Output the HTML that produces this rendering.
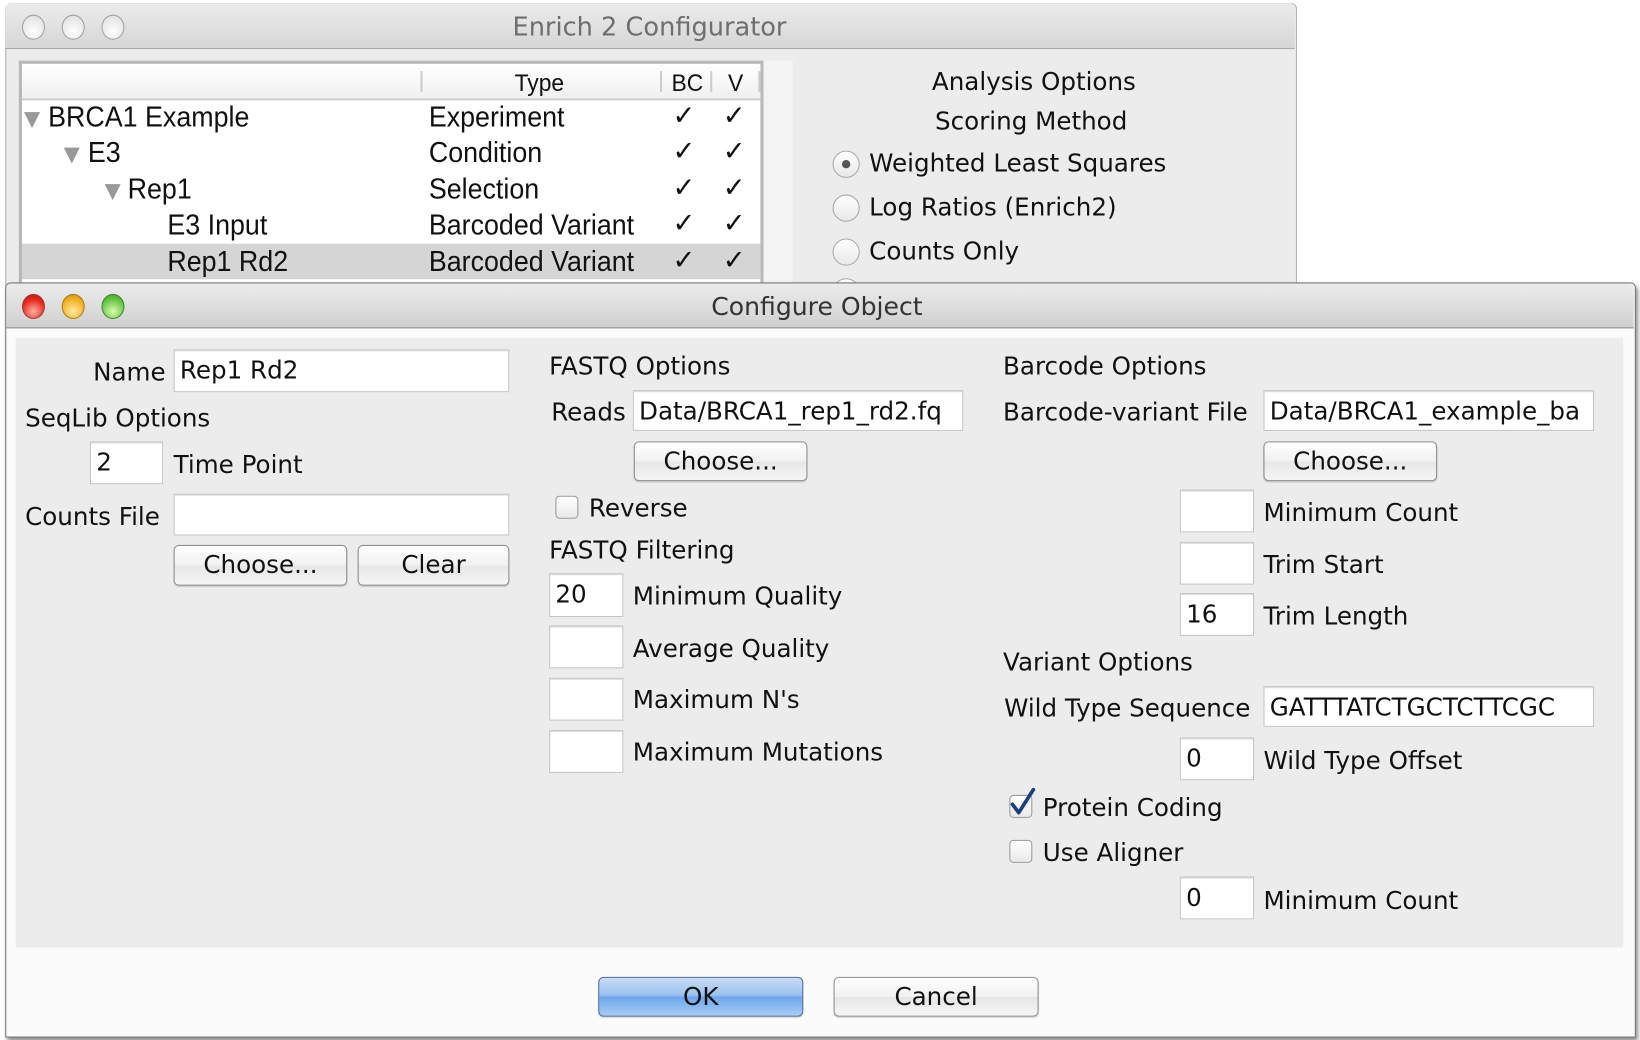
<!DOCTYPE html>
<html><head><meta charset="utf-8"><style>
html,body{margin:0;padding:0;background:#fff;width:1640px;height:1040px;overflow:hidden}
#w{position:absolute;left:0;top:0;width:1568px;height:994px;transform:scale(1.04592);transform-origin:0 0;font-family:"DejaVu Sans","Liberation Sans",sans-serif;font-size:23.5px;color:#111}
.a{position:absolute;white-space:nowrap}
.t{position:absolute;white-space:nowrap;line-height:28px;height:28px;margin-top:1px}
.in{position:absolute;background:#fff;border:1px solid #c4c4c4;box-shadow:inset 0 1px 0 #ddd;box-sizing:border-box;padding-left:5px;line-height:38px}
.btn{position:absolute;box-sizing:border-box;border:1px solid #8e8e8e;border-radius:5px;background:linear-gradient(#fff,#f1f1f1 50%,#e6e6e6 51%,#f6f6f6);text-align:center;line-height:37px;box-shadow:0 1px 1px rgba(0,0,0,.15)}
.cb{position:absolute;width:22px;height:22px;box-sizing:border-box;border:1px solid #9a9a9a;border-radius:4px;background:linear-gradient(#fff,#e9e9e9)}
.rd{position:absolute;width:26px;height:26px;box-sizing:border-box;border:1px solid #a8a8a8;border-radius:50%;background:linear-gradient(#fff,#e8e8e8)}
.tl{position:absolute;width:22px;height:24px;border-radius:50%;box-sizing:border-box}
.g{border:1px solid #a0a0a0;background:radial-gradient(circle at 50% 70%,#fff,#dcdcdc)}
.nar{font-family:"Liberation Sans",sans-serif;font-size:27px;transform:scaleX(.95);transform-origin:0 50%;margin-top:0}
.chk{position:absolute;font-family:"DejaVu Sans",sans-serif;font-size:26px;font-weight:bold}
.tri{position:absolute;color:#999;font-size:20px}
</style></head><body><div id="w">
<div class="a" style="left:5px;top:3px;width:1233px;height:280px;background:#ececec;border:1px solid #b0b0b0;border-radius:5px 5px 0 0"></div>
<div class="a" style="left:5px;top:3px;width:1233px;height:43px;background:linear-gradient(#ececec,#d6d6d6);border-bottom:1px solid #999;border-radius:5px 5px 0 0"></div>
<div class="tl g" style="left:21px;top:14px"></div><div class="tl g" style="left:59px;top:14px"></div><div class="tl g" style="left:97px;top:14px"></div>
<div class="t" style="left:490px;top:11px;color:#6e6e6e;font-size:24.5px">Enrich 2 Configurator</div>
<div class="a" style="left:18px;top:58px;width:712px;height:215px;background:#fff;border:3px solid #b8b8b8;box-sizing:border-box;border-bottom:none"></div>
<div class="a" style="left:21px;top:62px;width:706px;height:32px;background:linear-gradient(#fff,#f0f0f0);border-bottom:2px solid #d0d0d0"></div>
<div class="a" style="left:402px;top:68px;width:2px;height:20px;background:#ccc"></div>
<div class="a" style="left:631px;top:68px;width:2px;height:20px;background:#ccc"></div>
<div class="a" style="left:679px;top:68px;width:2px;height:20px;background:#ccc"></div>
<div class="a" style="left:725px;top:68px;width:2px;height:20px;background:#ccc"></div>
<div class="t nar" style="left:492px;top:65px;font-size:23px">Type</div>
<div class="t nar" style="left:642px;top:65px;font-size:23px">BC</div>
<div class="t nar" style="left:696px;top:65px;font-size:23px">V</div>
<div class="a" style="left:21px;top:233px;width:706px;height:34px;background:#d5d5d5"></div>
<div class="a" style="left:730px;top:58px;width:28px;height:215px;background:#f3f3f3"></div>
<div class="t tri" style="left:23px;top:98px">▼</div>
<div class="t nar" style="left:46px;top:98px">BRCA1 Example</div>
<div class="t tri" style="left:61px;top:132px">▼</div>
<div class="t nar" style="left:84px;top:132px">E3</div>
<div class="t tri" style="left:100px;top:167px">▼</div>
<div class="t nar" style="left:122px;top:167px">Rep1</div>
<div class="t nar" style="left:160px;top:201px">E3 Input</div>
<div class="t nar" style="left:160px;top:236px">Rep1 Rd2</div>
<div class="t nar" style="left:410px;top:98px">Experiment</div>
<div class="t nar" style="left:410px;top:132px">Condition</div>
<div class="t nar" style="left:410px;top:167px">Selection</div>
<div class="t nar" style="left:410px;top:201px">Barcoded Variant</div>
<div class="t nar" style="left:410px;top:236px">Barcoded Variant</div>
<div class="chk" style="left:643px;top:96px">✓</div><div class="chk" style="left:691px;top:96px">✓</div>
<div class="chk" style="left:643px;top:130px">✓</div><div class="chk" style="left:691px;top:130px">✓</div>
<div class="chk" style="left:643px;top:165px">✓</div><div class="chk" style="left:691px;top:165px">✓</div>
<div class="chk" style="left:643px;top:199px">✓</div><div class="chk" style="left:691px;top:199px">✓</div>
<div class="chk" style="left:643px;top:234px">✓</div><div class="chk" style="left:691px;top:234px">✓</div>
<div class="t" style="left:891px;top:63px">Analysis Options</div>
<div class="t" style="left:894px;top:101px">Scoring Method</div>
<div class="rd" style="left:796px;top:144px"></div><div class="a" style="left:805px;top:153px;width:8px;height:8px;border-radius:50%;background:#555"></div>
<div class="t" style="left:831px;top:141px">Weighted Least Squares</div>
<div class="rd" style="left:796px;top:186px"></div><div class="t" style="left:831px;top:183px">Log Ratios (Enrich2)</div>
<div class="rd" style="left:796px;top:228px"></div><div class="t" style="left:831px;top:225px">Counts Only</div>
<div class="rd" style="left:796px;top:266px"></div>
<div class="a" style="left:5px;top:270px;width:1557px;height:720px;background:#fbfbfb;border:1px solid #777;border-radius:5px 5px 0 0;box-shadow:2px 3px 4px rgba(0,0,0,.45)"></div>
<div class="a" style="left:6px;top:271px;width:1556px;height:42px;background:linear-gradient(#ececec,#d0d0d0);border-bottom:1px solid #6f6f6f;border-radius:5px 5px 0 0"></div>
<div class="tl" style="left:21px;top:281px;border:1px solid #a33;background:radial-gradient(circle at 50% 72%,#ffb0a0,#e52a1f 60%,#b5150f)"></div>
<div class="tl" style="left:59px;top:281px;border:1px solid #b07a10;background:radial-gradient(circle at 50% 72%,#ffe9a0,#f3b32a 60%,#c78a0c)"></div>
<div class="tl" style="left:97px;top:281px;border:1px solid #3d8a2a;background:radial-gradient(circle at 50% 72%,#d6ffb0,#6cc54a 60%,#3d9a26)"></div>
<div class="t" style="left:680px;top:278px;color:#333;font-size:24px">Configure Object</div>
<div class="a" style="left:15px;top:323px;width:1537px;height:583px;background:#ececec"></div>
<div class="t" style="left:89px;top:341px">Name</div>
<div class="in" style="left:166px;top:334px;width:321px;height:41px">Rep1 Rd2</div>
<div class="t" style="left:24px;top:385px">SeqLib Options</div>
<div class="in" style="left:86px;top:422px;width:70px;height:41px">2</div>
<div class="t" style="left:166px;top:429px">Time Point</div>
<div class="t" style="left:24px;top:479px">Counts File</div>
<div class="in" style="left:166px;top:472px;width:321px;height:40px"></div>
<div class="btn" style="left:166px;top:521px;width:166px;height:39px">Choose...</div>
<div class="btn" style="left:342px;top:521px;width:145px;height:39px">Clear</div>
<div class="t" style="left:525px;top:335px">FASTQ Options</div>
<div class="t" style="left:527px;top:379px">Reads</div>
<div class="in" style="left:605px;top:373px;width:316px;height:39px">Data/BRCA1_rep1_rd2.fq</div>
<div class="btn" style="left:606px;top:422px;width:166px;height:38px">Choose...</div>
<div class="cb" style="left:531px;top:474px"></div>
<div class="t" style="left:563px;top:471px">Reverse</div>
<div class="t" style="left:525px;top:511px">FASTQ Filtering</div>
<div class="in" style="left:525px;top:548px;width:71px;height:42px">20</div>
<div class="t" style="left:605px;top:555px">Minimum Quality</div>
<div class="in" style="left:525px;top:598px;width:71px;height:41px"></div>
<div class="t" style="left:605px;top:605px">Average Quality</div>
<div class="in" style="left:525px;top:648px;width:71px;height:41px"></div>
<div class="t" style="left:605px;top:654px">Maximum N's</div>
<div class="in" style="left:525px;top:698px;width:71px;height:41px"></div>
<div class="t" style="left:605px;top:704px">Maximum Mutations</div>
<div class="t" style="left:959px;top:335px">Barcode Options</div>
<div class="t" style="left:959px;top:379px">Barcode-variant File</div>
<div class="in" style="left:1208px;top:373px;width:316px;height:39px;overflow:hidden">Data/BRCA1_example_ba</div>
<div class="btn" style="left:1208px;top:422px;width:166px;height:38px">Choose...</div>
<div class="in" style="left:1128px;top:468px;width:71px;height:41px"></div>
<div class="t" style="left:1208px;top:475px">Minimum Count</div>
<div class="in" style="left:1128px;top:518px;width:71px;height:41px"></div>
<div class="t" style="left:1208px;top:525px">Trim Start</div>
<div class="in" style="left:1128px;top:567px;width:71px;height:41px">16</div>
<div class="t" style="left:1208px;top:574px">Trim Length</div>
<div class="t" style="left:959px;top:618px">Variant Options</div>
<div class="t" style="left:960px;top:662px">Wild Type Sequence</div>
<div class="in" style="left:1208px;top:656px;width:316px;height:39px">GATTTATCTGCTCTTCGC</div>
<div class="in" style="left:1128px;top:705px;width:71px;height:41px">0</div>
<div class="t" style="left:1208px;top:712px">Wild Type Offset</div>
<div class="cb" style="left:965px;top:760px"></div>
<svg class="a" style="left:962px;top:752px" width="30" height="32" viewBox="0 0 30 32"><path d="M6 17 L12 25 L26 3" fill="none" stroke="#1b3f7a" stroke-width="3.5" stroke-linecap="round" stroke-linejoin="round"/></svg>
<div class="t" style="left:997px;top:757px">Protein Coding</div>
<div class="cb" style="left:965px;top:803px"></div>
<div class="t" style="left:997px;top:800px">Use Aligner</div>
<div class="in" style="left:1128px;top:838px;width:71px;height:41px">0</div>
<div class="t" style="left:1208px;top:846px">Minimum Count</div>
<div class="btn" style="left:572px;top:934px;width:196px;height:38px;border-color:#4a6a9a;background:linear-gradient(#c9dcf6,#9cc2f0 45%,#6fa6ea 52%,#a6cdf7)">OK</div>
<div class="btn" style="left:797px;top:934px;width:196px;height:38px">Cancel</div>
</div></body></html>
